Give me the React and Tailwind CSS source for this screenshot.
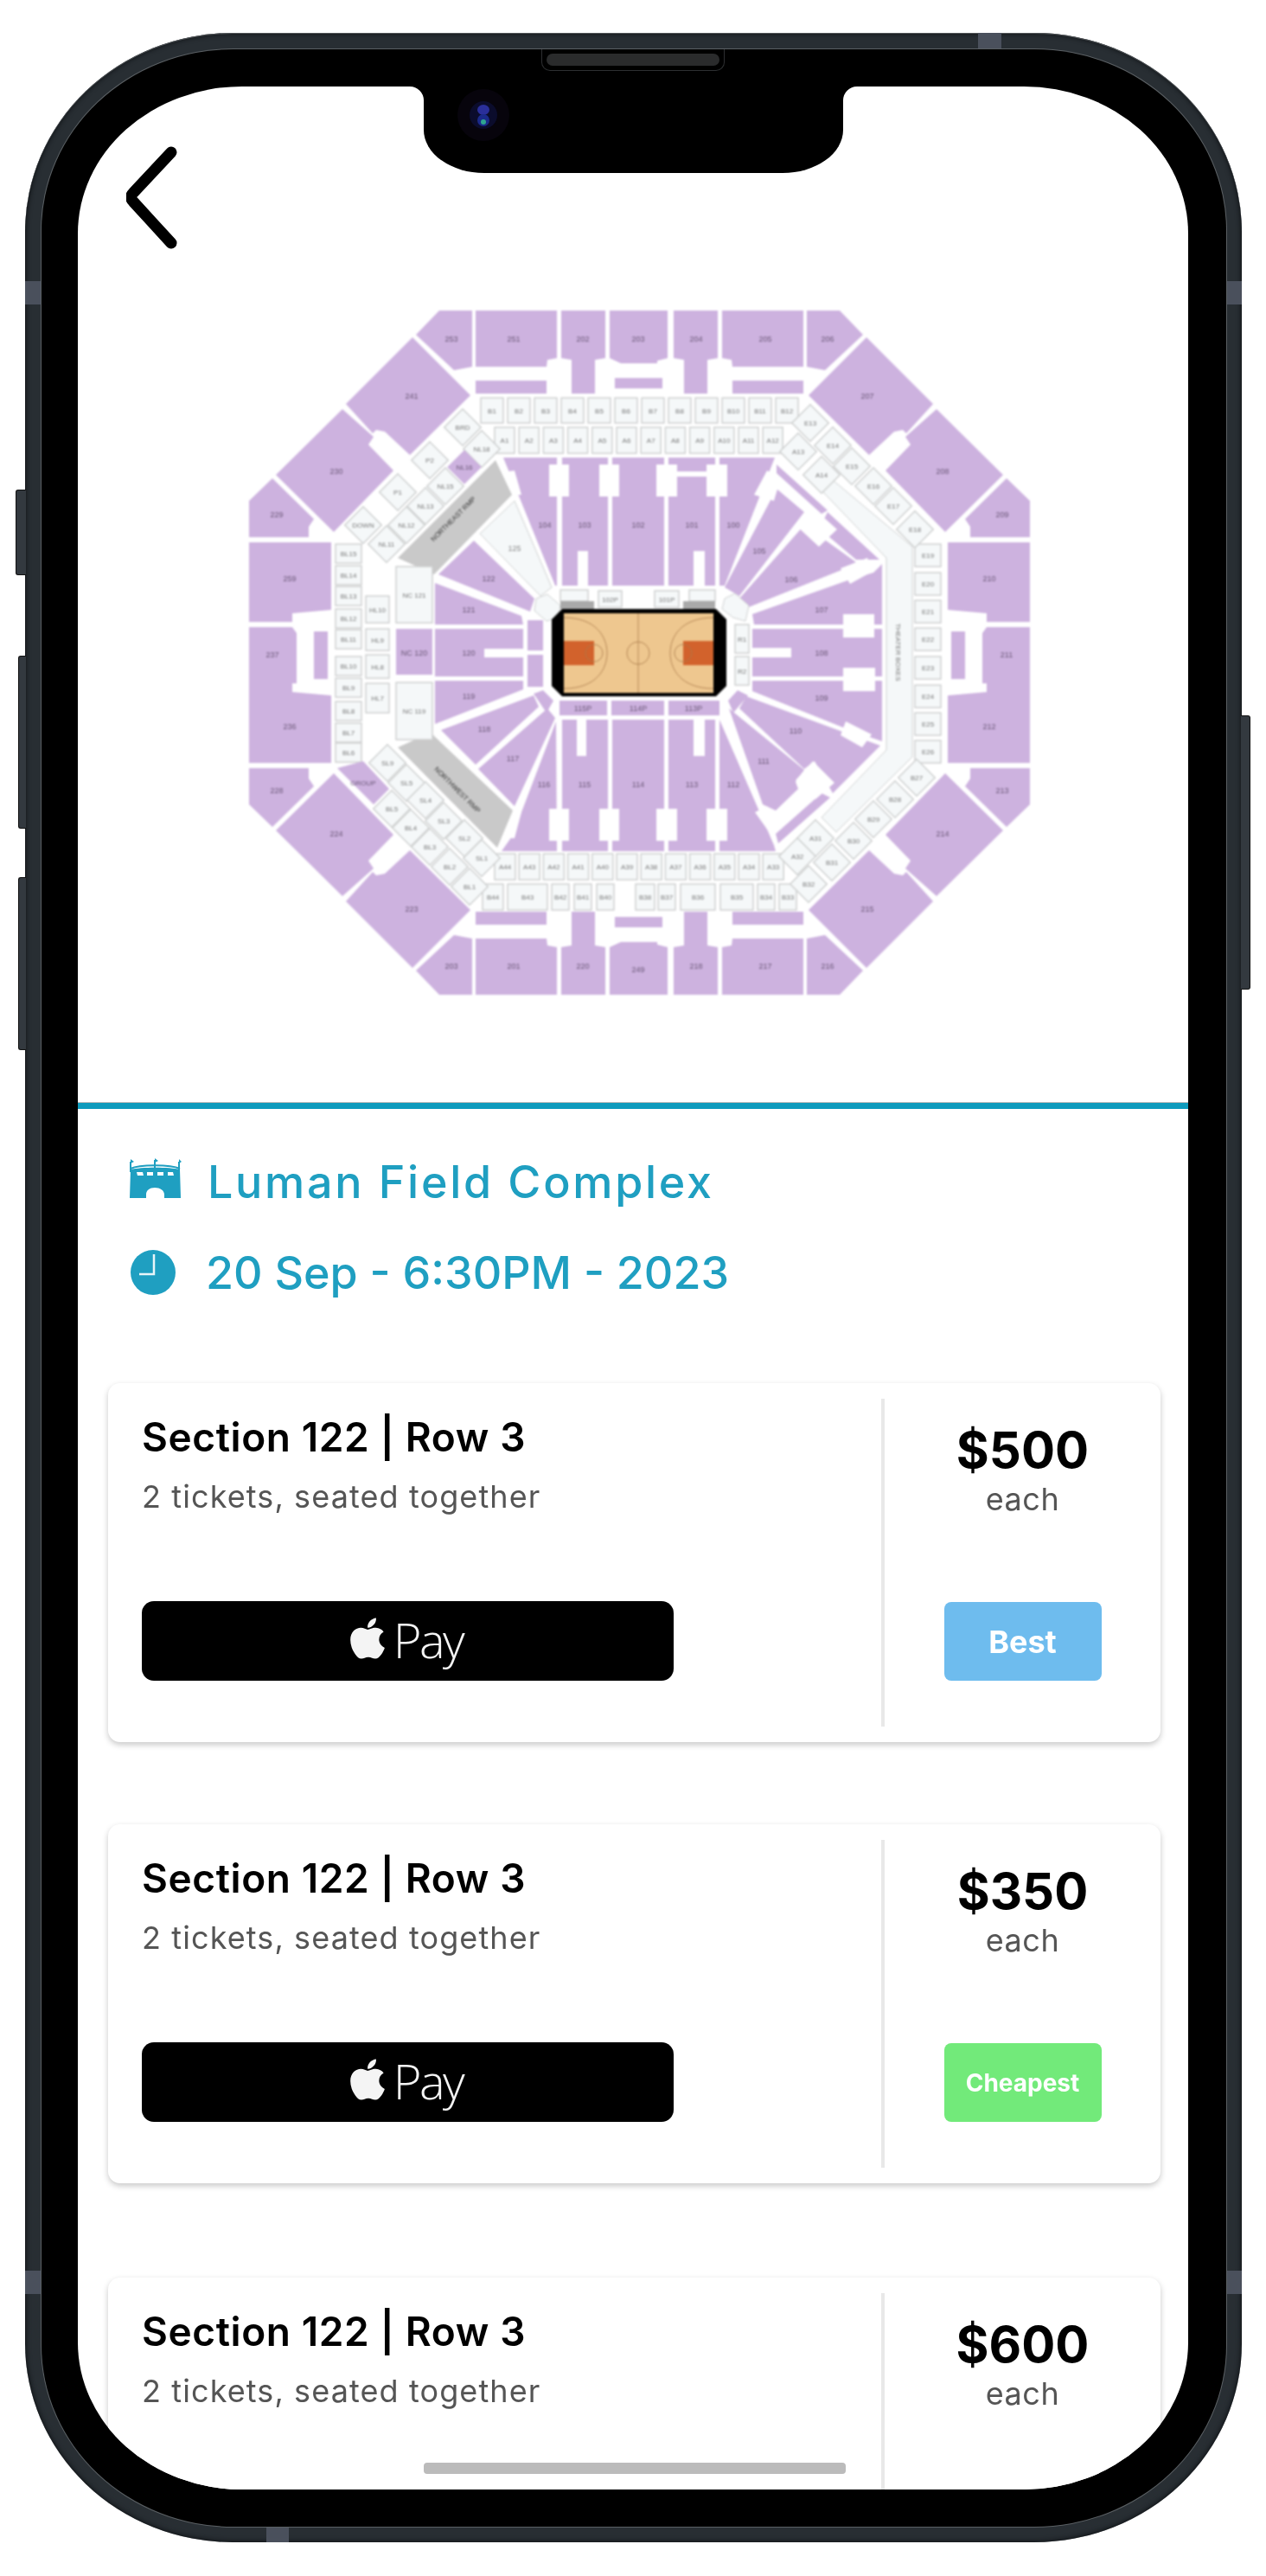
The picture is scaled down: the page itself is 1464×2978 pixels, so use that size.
import React from 'react';
import { FaApple } from 'react-icons/fa';

const PURPLE = '#cdb2df';
const LIGHT = '#f5f8f9';
const LINE = '#cfd1d1';
const pts = (list) => list.map((p) => p.join(',')).join(' ');
const flipX = (list) => list.map(([x, y]) => [1479 - x, y]);
const flipY = (list) => list.map(([x, y]) => [x, 1505 - y]);
const rect = (x, y, w, h) => [[x, y], [x + w, y], [x + w, y + h], [x, y + h]];

// top-left quarter of the upper bowl, flipped for the other three
const outerBowl = [
  { p: [[508, 357], [546, 357], [546, 422], [525, 426], [481, 385]], at: [522, 390], names: ['253', '206', '203', '216'] },
  { p: [[550, 357], [644, 357], [644, 412], [633, 414], [632, 422], [550, 422]], at: [594, 390], names: ['251', '205', '201', '217'] },
  { p: [[649, 357], [700, 357], [700, 412], [688, 414], [688, 453], [661, 453], [661, 414], [649, 412]], at: [674, 390], names: ['202', '204', '220', '218'] },
  { p: [[477, 388], [544, 455], [474, 524], [445, 497], [435, 495], [431, 499], [400, 465]], at: [476, 456], names: ['241', '207', '223', '215'] },
  { p: [[396, 471], [432, 503], [426, 512], [455, 542], [386, 613], [319, 547]], at: [389, 543], names: ['230', '208', '224', '214'] },
  { p: [[315, 551], [363, 598], [357, 607], [357, 619], [288, 619], [288, 577]], at: [320, 593], names: ['229', '209', '228', '213'] },
  { p: [[288, 625], [383, 625], [383, 703], [338, 707], [338, 717], [288, 717]], at: [335, 667], names: ['259', '210', '236', '212'] },
  { p: rect(550, 438, 82, 15), names: [] },
];

const midBowl = [
  [[[705, 357], [772, 357], [772, 412], [760, 415], [760, 418], [718, 418], [705, 412]], '203', 738, 390],
  [[[705, 1148], [772, 1148], [772, 1093], [760, 1090], [760, 1087], [718, 1087], [705, 1093]], '249', 738, 1119],
  [rect(711, 435, 55, 12)],
  [rect(711, 1058, 55, 12)],
  [[[288, 723], [338, 723], [343, 730], [343, 788], [288, 788]], '237', 315, 755],
  [[[1191, 723], [1141, 723], [1136, 730], [1136, 788], [1191, 788]], '211', 1164, 755],
  [rect(363, 728, 16, 55)],
  [rect(1100, 728, 16, 55)],
];

const lowerBowl = [
  [[[582, 527], [644, 527], [644, 675], [642, 675]], '104', 630, 605],
  [rect(650, 527, 53, 148), '103', 676, 605],
  [rect(708, 527, 60, 148), '102', 738, 605],
  [rect(773, 549, 54, 126), '101', 800, 605],
  [rect(773, 527, 54, 16)],
  [[[832, 527], [896, 527], [838, 675], [832, 675]], '100', 848, 605],
  [[[898, 563], [930, 590], [855, 687], [838, 677]], '105', 878, 635],
  [[[898, 535], [957, 588], [950, 592], [898, 545]]],
  [[[930, 605], [990, 648], [973, 657], [858, 703], [855, 690]], '106', 915, 668],
  [[[957, 590], [1017, 645], [990, 645], [958, 618], [952, 600]]],
  [[[1020, 650], [1020, 720], [872, 720], [870, 708], [983, 668], [1010, 660]], '107', 950, 703],
  [rect(870, 725, 150, 55), '108', 950, 753],
  [[[870, 785], [1020, 785], [1020, 855], [985, 843], [870, 797]], '109', 950, 805],
  [[[863, 803], [1018, 860], [963, 915], [942, 878], [930, 887], [855, 817]], '110', 920, 843],
  [[[843, 817], [930, 888], [920, 902], [923, 910], [897, 935], [882, 928]], '111', 883, 878],
  [[[960, 920], [900, 973], [897, 962], [950, 915]]],
  [[[832, 830], [895, 975], [897, 982], [832, 982]], '112', 848, 905],
  [rect(773, 830, 54, 152), '113', 800, 905],
  [rect(708, 830, 60, 152), '114', 738, 905],
  [rect(650, 830, 53, 152), '115', 676, 905],
  [[[643, 832], [644, 982], [580, 982], [592, 965], [603, 937]], '116', 629, 905],
  [[[553, 887], [633, 817], [642, 828], [595, 930]], '117', 593, 875],
  [[[510, 842], [617, 802], [623, 815], [550, 882]], '118', 560, 841],
  [[[503, 785], [605, 785], [605, 795], [503, 835]], '119', 542, 803],
  [rect(503, 725, 102, 55), '120', 542, 753],
  [[[503, 672], [603, 710], [605, 720], [503, 720]], '121', 542, 703],
  [[[548, 623], [618, 690], [613, 705], [507, 662]], '122', 565, 667],
  [rect(458, 725, 42, 53), 'NC 120', 479, 753],
  [rect(610, 715, 18, 35), '', 619, 733],
  [rect(610, 755, 18, 37), '', 619, 773],
  [rect(647, 808, 55, 17), '115P', 674, 817],
  [rect(707, 808, 61, 17), '114P', 738, 817],
  [rect(773, 808, 59, 17), '113P', 802, 817],
  [[[617, 800], [628, 796], [640, 808], [632, 822]]],
  [[[842, 808], [853, 796], [865, 802], [848, 822]]],
];

const voms = [
  rect(635, 535, 23, 37), rect(693, 535, 23, 37), rect(759, 535, 24, 37), rect(817, 535, 24, 37),
  rect(668, 635, 12, 40), rect(802, 635, 13, 40),
  rect(635, 933, 23, 37), rect(693, 933, 23, 37), rect(759, 933, 24, 37), rect(817, 933, 24, 37),
  rect(667, 830, 11, 42), rect(802, 830, 13, 42),
  rect(560, 748, 45, 10), rect(870, 747, 45, 11), rect(975, 708, 36, 27), rect(975, 770, 37, 27),
  [[587, 543], [595, 542], [603, 570], [595, 570]],
  [[887, 542], [903, 550], [895, 577], [872, 570]],
  [[940, 585], [968, 610], [947, 630], [920, 605]],
  [[1003, 643], [1010, 658], [983, 673], [972, 655]],
  [[940, 878], [965, 903], [943, 922], [920, 900]],
  [[932, 913], [938, 920], [900, 952], [894, 945]],
  [[873, 937], [887, 930], [903, 953], [893, 965]],
  [[978, 832], [1008, 847], [997, 862], [972, 848]],
  [[593, 935], [603, 937], [595, 967], [585, 967]],
];

const seatRows = [
  ...Array.from({ length: 12 }, (_, i) => [556 + i * 31, 458, 26, 29, `B${i + 1}`]),
  ...Array.from({ length: 12 }, (_, i) => [572 + i * 28.2, 492, 23, 30, `A${i + 1}`]),
  ...Array.from({ length: 12 }, (_, i) => [572 + i * 28.2, 985, 24, 30, `A${44 - i}`]),
  [558, 1020, 24, 30, 'B44'], [587, 1020, 46, 30, 'B43'], [638, 1020, 20, 30, 'B42'], [664, 1020, 20, 30, 'B41'], [690, 1020, 20, 30, 'B40'],
  [735, 1020, 22, 30, 'B38'], [761, 1020, 20, 30, 'B37'], [787, 1020, 40, 30, 'B36'], [833, 1020, 38, 30, 'B35'], [876, 1020, 20, 30, 'B34'], [901, 1020, 20, 30, 'B33'],
  ...[638, 663, 687, 713, 737, 768, 793, 820, 845, 868].map((y, i) => [388, y - 11, 30, 22, `BL${15 - i}`]),
  [423, 687, 27, 31, 'HL10'], [423, 725, 27, 25, 'HL9'], [423, 755, 27, 27, 'HL8'], [423, 788, 27, 34, 'HL7'],
  [458, 653, 42, 65, 'NC 121'], [458, 787, 42, 66, 'NC 119'],
  ...[640, 673, 705, 737, 770, 803, 835, 867].map((y, i) => [1058, y - 13, 30, 26, `E${19 + i}`]),
  [692, 681, 27, 19, '102P'], [757, 681, 28, 19, '101P'], [648, 680, 32, 13, ''], [797, 680, 30, 13, ''],
  [850, 720, 16, 33, 'R1'], [850, 757, 16, 33, 'R2'],
];

const diamonds = [
  [535, 492, 'BRD'], [497, 530, 'P2'], [460, 567, 'P1'], [420, 605, 'DOWN'],
  [557, 517, 'NL18'], [515, 560, 'NL15'], [492, 583, 'NL13'], [470, 605, 'NL12'], [447, 627, 'NL11'],
  [448, 880, 'SL9'], [470, 903, 'SL5'], [492, 923, 'SL4'], [513, 947, 'SL3'], [537, 967, 'SL2'], [557, 990, 'SL1'],
  [453, 933, 'BL5'], [475, 955, 'BL4'], [497, 977, 'BL3'], [520, 1000, 'BL2'], [543, 1023, 'BL1'],
  [937, 487, 'E13'], [963, 513, 'E14'], [985, 537, 'E15'], [1010, 560, 'E16'], [1033, 583, 'E17'], [1058, 610, 'E18'],
  [923, 520, 'A13'], [950, 547, 'A14'],
  [1060, 897, 'B27'], [1035, 922, 'B28'], [1010, 945, 'B29'], [987, 970, 'B30'], [962, 995, 'B31'], [935, 1020, 'B32'],
  [943, 967, 'A31'], [922, 988, 'A32'],
];

function Label({ x, y, children, fill = '#6b5878', size = 9 }) {
  return (
    <text x={x} y={y + 3} textAnchor="middle" fontSize={size} fill={fill} fontFamily="Liberation Sans, sans-serif">
      {children}
    </text>
  );
}

function SeatMap() {
  return (
    <svg viewBox="288 356 903 792" className="block w-[903px] h-[792px] ml-[198px] mt-[67px] blur-[0.8px]">
      {/* light corridor on the east side */}
      <polygon
        points={pts([[963, 553], [1055, 630], [1055, 873], [967, 960], [950, 943], [1025, 865], [1025, 643], [952, 567]])}
        fill={LIGHT}
        stroke={LINE}
      />
      <text x={0} y={0} fontSize="8" fill="#777" fontFamily="Liberation Sans, sans-serif" textAnchor="middle" transform="translate(1036 752) rotate(90)">
        THEATER BOXES
      </text>

      {outerBowl.map((s, i) => (
        <g key={i}>
          <polygon points={pts(s.p)} fill={PURPLE} />
          <polygon points={pts(flipX(s.p))} fill={PURPLE} />
          <polygon points={pts(flipY(s.p))} fill={PURPLE} />
          <polygon points={pts(flipX(flipY(s.p)))} fill={PURPLE} />
          {s.at && (
            <>
              <Label x={s.at[0]} y={s.at[1]}>{s.names[0]}</Label>
              <Label x={1479 - s.at[0]} y={s.at[1]}>{s.names[1]}</Label>
              <Label x={s.at[0]} y={1505 - s.at[1]}>{s.names[2]}</Label>
              <Label x={1479 - s.at[0]} y={1505 - s.at[1]}>{s.names[3]}</Label>
            </>
          )}
        </g>
      ))}

      {[...midBowl, ...lowerBowl].map(([p, name, x, y], i) => (
        <g key={i}>
          <polygon points={pts(p)} fill={PURPLE} />
          {name && <Label x={x} y={y}>{name}</Label>}
        </g>
      ))}

      {voms.map((p, i) => <polygon key={i} points={pts(p)} fill="#fff" />)}

      {/* grey ramps */}
      <polygon points={pts([[573, 530], [592, 570], [502, 662], [460, 643]])} fill="#c9c9c9" />
      <text fontSize="8" fill="#333" fontFamily="Liberation Sans, sans-serif" textAnchor="middle" transform="translate(526 600) rotate(-45)">NORTHEAST RMP</text>
      <polygon points={pts([[498, 845], [593, 935], [575, 978], [460, 862]])} fill="#c9c9c9" />
      <text fontSize="8" fill="#333" fontFamily="Liberation Sans, sans-serif" textAnchor="middle" transform="translate(527 913) rotate(45)">NORTHWEST RMP</text>

      <polygon points={pts([[595, 577], [638, 677], [625, 687], [555, 615]])} fill={LIGHT} stroke={LINE} />
      <Label x={595} y={632} fill="#888">125</Label>

      {seatRows.map(([x, y, w, h, name], i) => (
        <g key={i}>
          <rect x={x} y={y} width={w} height={h} fill={LIGHT} stroke={LINE} strokeWidth="1.5" />
          {name && <Label x={x + w / 2} y={y + h / 2} fill="#777" size={8}>{name}</Label>}
        </g>
      ))}

      {diamonds.map(([x, y, name], i) => (
        <g key={i}>
          <rect x={x - 15} y={y - 15} width="30" height="30" fill={LIGHT} stroke={LINE} strokeWidth="1.5" transform={`rotate(45 ${x} ${y})`} />
          <Label x={x} y={y} fill="#777" size={8}>{name}</Label>
        </g>
      ))}
      <rect x={523} y={524} width="28" height="28" fill={PURPLE} transform="rotate(45 537 538)" />
      <Label x={537} y={538} size={8}>NL16</Label>
      <polygon points={pts([[390, 886], [420, 878], [450, 910], [432, 928]])} fill={PURPLE} />
      <Label x={420} y={903} size={8}>GROUP</Label>
      <polygon points={pts([[620, 690], [633, 685], [648, 698], [645, 712], [632, 716], [618, 704]])} fill={LIGHT} stroke={LINE} />
      <polygon points={pts([[838, 690], [850, 684], [866, 698], [862, 716], [848, 712], [835, 702]])} fill={LIGHT} stroke={LINE} />

      {/* court */}
      <rect x="648" y="693" width="39" height="9" fill="#a9a9a9" />
      <rect x="790" y="693" width="37" height="9" fill="#a9a9a9" />
      <polygon points={pts([[650, 702], [828, 702], [840, 714], [840, 791], [828, 803], [650, 803], [638, 791], [638, 714]])} fill="#000" />
      <rect x="652" y="707" width="173" height="92" fill="#eec78f" />
      <rect x="652" y="739" width="35" height="28" fill="#d2622c" />
      <rect x="790" y="739" width="35" height="28" fill="#d2622c" />
      <g fill="none" stroke="#a8794a" strokeWidth="0.8">
        <path d="M738 707V799" />
        <circle cx="738" cy="753" r="13" />
        <path d="M652 712C690 712 702 735 702 753S690 794 652 794" />
        <path d="M825 712C787 712 775 735 775 753S787 794 825 794" />
        <circle cx="687" cy="753" r="10" />
        <circle cx="790" cy="753" r="10" />
      </g>
    </svg>
  );
}

function StadiumIcon() {
  return (
    <svg viewBox="0 0 61 47" className="w-[61px] h-[47px] shrink-0" fill="#1f9fc1">
      <path d="M2 4V16M30 2V12M58 4V16" stroke="#1f9fc1" strokeWidth="2" />
      <path d="M2 1l4 3-4 2zM30 0l4 3-4 2zM58 1l3 3-3 2z" />
      <path d="M2 12C12 7 48 7 59 12" fill="none" stroke="#1f9fc1" strokeWidth="2" />
      <path fillRule="evenodd" d="M2 13C14 10 47 10 59 13L60 46H41V42C41 37 36 34 30 34S20 37 20 42V46H1ZM9 16L10 20H17L16 16ZM21 16V20H28V16ZM33 16V20H40V16ZM45 16V20H52L51 16Z" />
    </svg>
  );
}

function ClockIcon() {
  return (
    <svg viewBox="0 0 52 52" className="w-[52px] h-[52px] shrink-0">
      <circle cx="26" cy="26" r="26" fill="#1f9fc1" />
      <path d="M27 5V28H10" fill="none" stroke="#e8f5f9" strokeWidth="2.5" />
    </svg>
  );
}

// tag is left out on the last card, its lower half is below the fold
function TicketCard({ price, tag, tagClass, className = '' }) {
  return (
    <div className={`flex w-[1217px] h-[415px] shrink-0 rounded-[14px] bg-white shadow-[0_3px_7px_rgba(0,0,0,0.22)] ${className}`}>
      <div className="w-[894px] shrink-0 pl-[39px] pt-[30px]">
        <h3 className="text-[46px] leading-[64px] font-semibold text-black tracking-[0.6px]">Section 122 | Row 3</h3>
        <p className="mt-[14px] text-[36px] leading-[46px] text-[#555] tracking-[1.1px]">2 tickets, seated together</p>
        {tag && (
          <div className="mt-[98px] flex w-[615px] h-[92px] items-center justify-center rounded-[14px] bg-black text-[#f4f4f4]">
            <FaApple className="w-[50px] h-[54px] mr-[5px] mb-[6px]" />
            <span className="font-['Open_Sans',sans-serif] font-light text-[56px] leading-none tracking-[-2.5px] mb-[4px] mr-[8px]">Pay</span>
          </div>
        )}
      </div>
      <div className="w-[4px] my-[18px] bg-[#e8e8e8] shrink-0" />
      <div className="flex flex-1 flex-col items-center pt-[42px]">
        <div className="text-[58px] leading-[70px] font-bold text-black">{price}</div>
        <div className="text-[36px] leading-[44px] text-[#555] tracking-[0.5px]">each</div>
        {tag && (
          <div className={`mt-[97px] flex w-[182px] h-[91px] items-center justify-center rounded-[8px] font-bold text-white ${tagClass}`}>
            {tag}
          </div>
        )}
      </div>
    </div>
  );
}

export default function App() {
  return (
    <div className="w-[1464px] h-[2978px] bg-white pt-[38px] pl-[29px] font-['Inter',sans-serif]">
      {/* phone body */}
      <div className="relative w-[1407px] h-[2901px] rounded-[240px/230px] bg-[#282e33] p-[19px] shadow-[inset_0_0_6px_#07090b,inset_0_1px_0_#8b9094]">
        <div className="absolute -left-[11px] top-[528px] w-[12px] h-[99px] rounded-l-[3px] bg-[#33393f] border border-[#111] border-r-0" />
        <div className="absolute -left-[8px] top-[720px] w-[9px] h-[200px] rounded-l-[3px] bg-[#33393f] border border-[#111] border-r-0" />
        <div className="absolute -left-[8px] top-[976px] w-[9px] h-[200px] rounded-l-[3px] bg-[#33393f] border border-[#111] border-r-0" />
        <div className="absolute -right-[10px] top-[789px] w-[11px] h-[317px] rounded-r-[3px] bg-[#33393f] border border-[#111] border-l-0" />

        {/* antenna bands */}
        <div className="absolute left-0 top-[287px] w-[19px] h-[27px] bg-[#4a505c]" />
        <div className="absolute right-0 top-[287px] w-[18px] h-[27px] bg-[#4a505c]" />
        <div className="absolute left-0 top-[2587px] w-[19px] h-[27px] bg-[#4a505c]" />
        <div className="absolute right-0 top-[2587px] w-[18px] h-[27px] bg-[#4a505c]" />
        <div className="absolute left-[1102px] top-0 w-[27px] h-[19px] bg-[#4a505c]" />
        <div className="absolute left-[279px] bottom-0 w-[26px] h-[18px] bg-[#4a505c]" />

        <div className="relative w-[1370px] h-[2864px] rounded-[222px/210px] bg-black pl-[42px] pt-[43px] shadow-[0_0_0_1px_#5b6064]">
          {/* speaker */}
          <div className="absolute left-[578px] top-0 w-[212px] h-[25px] rounded-b-[10px] border border-t-0 border-[#2d2f31] bg-black p-[5px] pt-[5px]">
            <div className="h-[14px] rounded-full bg-[#2a2b2c]" />
          </div>

          {/* screen */}
          <div className="relative w-[1284px] h-[2778px] overflow-hidden rounded-[190px/170px] bg-white">
            {/* notch */}
            <div className="absolute left-[400px] top-0 z-10 w-[485px] h-[100px] rounded-b-[70px_50px] bg-black">
              <div className="absolute -left-[16px] top-0 w-[16px] h-[16px] bg-black">
                <div className="w-full h-full rounded-tr-[16px] bg-white" />
              </div>
              <div className="absolute -right-[16px] top-0 w-[16px] h-[16px] bg-black">
                <div className="w-full h-full rounded-tl-[16px] bg-white" />
              </div>
              <svg viewBox="0 0 60 60" className="absolute left-[39px] top-[3px] w-[60px] h-[60px]">
                <circle cx="30" cy="30" r="30" fill="#07040c" />
                <circle cx="30" cy="30" r="16" fill="#0b0c2c" />
                <ellipse cx="30" cy="24" rx="7" ry="6" fill="#2a2f9a" />
                <ellipse cx="30" cy="36" rx="7" ry="7" fill="#1a2a8a" />
                <circle cx="30" cy="38" r="3" fill="#2fa58f" />
              </svg>
            </div>

            {/* back */}
            <svg viewBox="0 0 60 125" className="block w-[60px] h-[125px] ml-[56px] mt-[66px]" fill="none" stroke="#000" strokeWidth="13" strokeLinecap="round" strokeLinejoin="round">
              <path d="M52 10L8 57Q3 62 8 67L52 115" />
            </svg>

            <SeatMap />

            <div className="mt-[124px] h-[8px] border-t border-[#b9b9b9] bg-[#0e9bbd]" />

            <div className="blur-[0.5px]">
              <div className="mt-[57px] pl-[59px] flex items-center gap-[30px] h-[47px]">
                <StadiumIcon />
                <span className="pt-[8px] text-[52px] leading-[47px] font-medium text-[#1f9fc1] tracking-[2.7px]">Luman Field Complex</span>
              </div>
              <div className="mt-[59px] pl-[61px] flex items-center gap-[35px] h-[52px]">
                <ClockIcon />
                <span className="pt-[2px] text-[52px] leading-[52px] font-medium text-[#1f9fc1]">20 Sep - 6:30PM - 2023</span>
              </div>

              <div className="mt-[102px] pl-[35px] flex flex-col">
                <TicketCard price="$500" tag="Best" tagClass="bg-[#6ebcee] text-[36px]" />
                <TicketCard price="$350" tag="Cheapest" tagClass="bg-[#72ea7a] text-[28px]" className="mt-[95px]" />
                <TicketCard price="$600" className="mt-[109px]" />
              </div>
            </div>

            {/* home indicator */}
            <div className="absolute left-[400px] top-[2747px] w-[488px] h-[13px] rounded-[4px] bg-[#bbb]" />
          </div>
        </div>
      </div>
    </div>
  );
}
